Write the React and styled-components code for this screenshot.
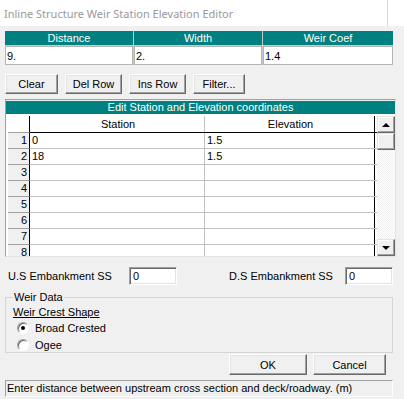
import React from 'react';
import styled, { createGlobalStyle } from 'styled-components';

const GlobalStyle = createGlobalStyle`
  body {
    margin: 0;
    background: #f0f0f0;
    font-family: 'Liberation Sans', Arial, sans-serif;
    font-size: 11px;
    color: #000;
  }
`;

const Window = styled.div`
  width: 404px;
  height: 399px;
  background: #f0f0f0;
  display: flex;
  flex-direction: column;
  overflow: hidden;
`;

const TitleBar = styled.div`
  height: 26px;
  background: #fff;
  display: flex;
  align-items: center;
  padding-left: 4px;
  font-family: 'Noto Sans', 'Open Sans', sans-serif;
  font-size: 11px;
  color: #999;
`;

const TitleText = styled.span`
  flex: 1;
`;

const CloseEdge = styled.span`
  align-self: stretch;
  width: 16px;
  border-left: 1px solid #d8d8d8;
`;

const Body = styled.div`
  display: flex;
  flex-direction: column;
  padding: 5px 0 0 5px;
`;

const TopTable = styled.div`
  width: 388px;
  display: grid;
  grid-template-columns: 128px 128px 130px;
  grid-template-rows: 14px 19px;
  gap: 1px;
  background: #c8c8c8;
`;

const HeadCell = styled.div`
  background: #008080;
  color: #fff;
  display: flex;
  align-items: center;
  justify-content: center;
  line-height: 14px;
`;

const DataCell = styled.div`
  background: #fff;
  border: 1px solid #b4b4b4;
  padding-left: 1px;
  display: flex;
  align-items: center;
`;

const ButtonRow = styled.div`
  display: flex;
  gap: ${(p) => p.$gap || 7}px;
  margin-top: ${(p) => p.$top || 0}px;
  justify-content: ${(p) => (p.$end ? 'flex-end' : 'flex-start')};
  padding-right: ${(p) => (p.$end ? 7 : 0)}px;
  width: 388px;
  box-sizing: border-box;
`;

const Button = styled.button`
  width: ${(p) => p.$w}px;
  height: ${(p) => p.$h || 20}px;
  box-sizing: border-box;
  background: #f0f0f0;
  border: 1px solid;
  border-color: #fff #696969 #696969 #fff;
  box-shadow: inset -1px -1px #a0a0a0, inset 1px 1px #e3e3e3;
  font-family: 'Liberation Sans', Arial, sans-serif;
  font-size: 11px;
  color: #000;
  padding: 0;
`;

const GridPanel = styled.div`
  margin-top: 5px;
  width: 391px;
  height: 158px;
  box-sizing: border-box;
  border: 1px solid;
  border-color: #a0a0a0 #e3e3e3 #e3e3e3 #a0a0a0;
  display: flex;
  flex-direction: column;
`;

const Caption = styled.div`
  height: 13px;
  margin-top: 1px;
  background: #008080;
  color: #fff;
  text-align: center;
  line-height: 13px;
`;

const GridBody = styled.div`
  flex: 1;
  background: #fff;
  display: flex;
  overflow: hidden;
`;

const Table = styled.div`
  width: 369px;
  padding: 2px 0 0 2px;
  display: flex;
  flex-direction: column;
`;

const Row = styled.div`
  display: flex;
  height: ${(p) => (p.$head ? 16 : 15)}px;
  flex-shrink: 0;
  border-bottom: 1px solid ${(p) => (p.$head ? '#000' : '#c0c0c0')};
`;

const RowHead = styled.div`
  width: 22px;
  box-sizing: border-box;
  padding-right: 2px;
  text-align: right;
  background: ${(p) => (p.$head ? '#fff' : '#f0f0f0')};
  border-right: 1px solid #000;
  line-height: 15px;
  margin-bottom: -1px;
  border-bottom: 1px solid #a0a0a0;
`;

const Cell = styled.div`
  width: ${(p) => p.$w}px;
  box-sizing: border-box;
  border-right: 1px solid ${(p) => (p.$last ? '#000' : '#c0c0c0')};
  padding-left: 2px;
  line-height: ${(p) => (p.$head ? 16 : 15)}px;
  text-align: ${(p) => (p.$head ? 'center' : 'left')};
`;

const ScrollBar = styled.div`
  width: 18px;
  margin-top: 2px;
  display: flex;
  flex-direction: column;
  background-color: #fff;
  background-image: conic-gradient(#f0f0f0 25%, #fff 0 50%, #f0f0f0 0 75%, #fff 0);
  background-size: 2px 2px;
`;

const ScrollButton = styled.div`
  height: 17px;
  box-sizing: border-box;
  background: #f0f0f0;
  border: 1px solid;
  border-color: #e3e3e3 #696969 #696969 #e3e3e3;
  box-shadow: inset -1px -1px #a0a0a0, inset 1px 1px #fff;
  display: flex;
  align-items: center;
  justify-content: center;
  margin-top: ${(p) => (p.$bottom ? 'auto' : '0')};
`;

const Arrow = styled.span`
  width: 0;
  height: 0;
  border-left: 4px solid transparent;
  border-right: 4px solid transparent;
  ${(p) => (p.$down ? 'border-top: 4px solid #000;' : 'border-bottom: 4px solid #000;')}
`;

const EmbRow = styled.div`
  margin-top: 10px;
  width: 388px;
  display: flex;
  align-items: center;
  height: 18px;
`;

const Label = styled.span`
  width: ${(p) => p.$w}px;
  margin-left: ${(p) => p.$ml || 0}px;
  padding-left: ${(p) => p.$pl || 0}px;
  box-sizing: border-box;
`;

const Input = styled.div`
  width: 48px;
  height: 18px;
  box-sizing: border-box;
  background: #fff;
  border: 1px solid;
  border-color: #a0a0a0 #fff #fff #a0a0a0;
  box-shadow: inset 1px 1px #696969, inset -1px -1px #e3e3e3;
  padding-left: 3px;
  line-height: 16px;
`;

const Group = styled.fieldset`
  margin: 6px 0 0 0;
  width: 388px;
  height: 62px;
  box-sizing: border-box;
  border: 1px solid #d5d5d5;
  padding: 0 0 0 7px;
`;

const Legend = styled.legend`
  padding: 0 1px;
  line-height: 13px;
`;

const Underlined = styled.div`
  text-decoration: underline;
  line-height: 14px;
  margin-top: 1px;
`;

const RadioRow = styled.div`
  display: flex;
  align-items: center;
  height: 17px;
  padding-left: 4px;
`;

const RadioDot = styled.span`
  width: 12px;
  height: 12px;
  box-sizing: border-box;
  border-radius: 50%;
  background: #fff;
  border: 1px solid;
  border-color: #a0a0a0 #fff #fff #a0a0a0;
  box-shadow: inset 1px 1px #696969;
  display: flex;
  align-items: center;
  justify-content: center;
  margin-right: 6px;

  &::after {
    content: '';
    width: 4px;
    height: 4px;
    border-radius: 50%;
    background: ${(p) => (p.$on ? '#000' : 'transparent')};
  }
`;

const StatusBar = styled.div`
  margin-top: 5px;
  width: 388px;
  height: 17px;
  box-sizing: border-box;
  border: 1px solid;
  border-color: #a0a0a0 #fff #fff #a0a0a0;
  padding-left: 1px;
  line-height: 15px;
  white-space: nowrap;
`;

const rows = [
  ['0', '1.5'],
  ['18', '1.5'],
  ['', ''],
  ['', ''],
  ['', ''],
  ['', ''],
  ['', ''],
  ['', ''],
];

export default function App() {
  return (
    <Window>
      <GlobalStyle />
      <TitleBar>
        <TitleText>Inline Structure Weir Station Elevation Editor</TitleText>
        <CloseEdge />
      </TitleBar>
      <Body>
        <TopTable>
          <HeadCell>Distance</HeadCell>
          <HeadCell>Width</HeadCell>
          <HeadCell>Weir Coef</HeadCell>
          <DataCell>9.</DataCell>
          <DataCell>2.</DataCell>
          <DataCell>1.4</DataCell>
        </TopTable>

        <ButtonRow $top={9}>
          <Button $w={53}>Clear</Button>
          <Button $w={57}>Del Row</Button>
          <Button $w={57}>Ins Row</Button>
          <Button $w={52}>Filter...</Button>
        </ButtonRow>

        <GridPanel>
          <Caption>Edit Station and Elevation coordinates</Caption>
          <GridBody>
            <Table>
              <Row $head>
                <RowHead $head />
                <Cell $w={175} $head>Station</Cell>
                <Cell $w={170} $head $last>Elevation</Cell>
              </Row>
              {rows.map((r, i) => (
                <Row key={i}>
                  <RowHead>{i + 1}</RowHead>
                  <Cell $w={175}>{r[0]}</Cell>
                  <Cell $w={170} $last>{r[1]}</Cell>
                </Row>
              ))}
            </Table>
            <ScrollBar>
              <ScrollButton><Arrow /></ScrollButton>
              <ScrollButton />
              <ScrollButton $bottom><Arrow $down /></ScrollButton>
            </ScrollBar>
          </GridBody>
        </GridPanel>

        <EmbRow>
          <Label $w={124} $pl={3}>U.S Embankment SS</Label>
          <Input>0</Input>
          <Label $w={116} $ml={52}>D.S Embankment SS</Label>
          <Input>0</Input>
        </EmbRow>

        <Group>
          <Legend>Weir Data</Legend>
          <Underlined>Weir Crest Shape</Underlined>
          <RadioRow>
            <RadioDot $on />
            Broad Crested
          </RadioRow>
          <RadioRow>
            <RadioDot />
            Ogee
          </RadioRow>
        </Group>

        <ButtonRow $end $gap={6} $top={1}>
          <Button $w={78} $h={21}>OK</Button>
          <Button $w={73} $h={21}>Cancel</Button>
        </ButtonRow>

        <StatusBar>Enter distance between upstream cross section and deck/roadway. (m)</StatusBar>
      </Body>
    </Window>
  );
}
